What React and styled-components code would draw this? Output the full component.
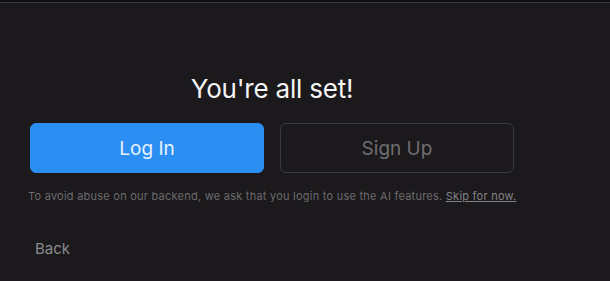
import React from 'react';
import styled, { createGlobalStyle } from 'styled-components';

const GlobalStyle = createGlobalStyle`
  html, body {
    margin: 0;
    padding: 0;
    background: #1b191c;
  }
  body {
    font-family: Inter, "Liberation Sans", sans-serif;
    -webkit-font-smoothing: antialiased;
  }
`;

const Screen = styled.div`
  width: 610px;
  height: 281px;
  box-sizing: border-box;
  background: #1b191c;
  border-top: 2px solid #0e0d0f;
  position: relative;
  overflow: hidden;
  &::before {
    content: '';
    display: block;
    height: 1px;
    background: #3b3a3d;
  }
`;

const Panel = styled.div`
  width: 484px;
  padding: 70px 0 0 30px;
  display: flex;
  flex-direction: column;
`;

const Title = styled.h1`
  margin: 0;
  font-size: 26px;
  font-weight: 400;
  color: #f4f4f5;
  text-align: center;
  letter-spacing: -0.2px;
  line-height: 32px;
`;

const Buttons = styled.div`
  display: grid;
  grid-template-columns: 1fr 1fr;
  gap: 16px;
  margin-top: 18px;
`;

const Button = styled.button`
  height: 50px;
  border-radius: 6px;
  font-family: inherit;
  font-size: 19px;
  font-weight: 400;
  cursor: pointer;
  background: ${p => (p.$primary ? '#2b8ef3' : 'transparent')};
  color: ${p => (p.$primary ? '#e8f1fc' : '#6f6e71')};
  border: 1px solid ${p => (p.$primary ? '#2b8ef3' : '#3a393c')};
`;

const Note = styled.p`
  margin: 17px 0 0 -2px;
  font-size: 11px;
  line-height: 13px;
  color: #6c6b6e;
  white-space: nowrap;
  letter-spacing: 0.24px;
`;

const SkipLink = styled.a`
  color: #838285;
  text-decoration: underline;
  cursor: pointer;
`;

const BackLink = styled.button`
  align-self: flex-start;
  margin: 36px 0 0 5px;
  padding: 0;
  border: 0;
  background: none;
  font-family: inherit;
  font-size: 15px;
  color: #8b8a8d;
  cursor: pointer;
`;

export default function App() {
  return (
    <>
      <GlobalStyle />
      <Screen>
        <Panel>
          <Title>You're all set!</Title>
          <Buttons>
            <Button $primary>Log In</Button>
            <Button>Sign Up</Button>
          </Buttons>
          <Note>
            To avoid abuse on our backend, we ask that you login to use the AI features.{' '}
            <SkipLink>Skip for now.</SkipLink>
          </Note>
          <BackLink>Back</BackLink>
        </Panel>
      </Screen>
    </>
  );
}
